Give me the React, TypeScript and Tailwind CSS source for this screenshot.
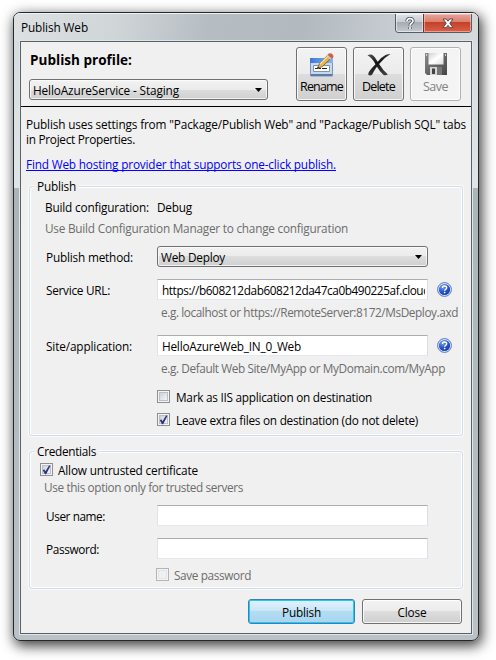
import { useLayoutEffect, useRef, useState } from "react";
import type { ReactNode } from "react";

/** A single line of text whose letter spacing is tuned so that it spans `w` pixels. */
function Line({ w, children, className = "" }: { w: number; children: string; className?: string }) {
  const ref = useRef<HTMLSpanElement>(null);
  const [spacing, setSpacing] = useState(0);
  useLayoutEffect(() => {
    if (ref.current) {
      const natural = ref.current.getBoundingClientRect().width - spacing * children.length;
      setSpacing((w - natural) / children.length);
    }
  }, [w, children]);
  return (
    <span className={`inline-block shrink-0 whitespace-pre ${className}`}>
      <span ref={ref} style={{ letterSpacing: spacing }}>
        {children}
      </span>
    </span>
  );
}

function Arrow() {
  return (
    <svg width="7" height="4" viewBox="0 0 7 4" className="shrink-0">
      <path d="M0 0h7L3.5 4z" fill="#000" />
    </svg>
  );
}

function Select({ children, className }: { children: ReactNode; className: string }) {
  return (
    <div
      className={`flex h-[21px] items-center justify-between rounded-[3px] border border-[#707070] bg-[linear-gradient(#f2f2f2_0,#ebebeb_50%,#dddddd_50%,#cfcfcf_100%)] pr-[5px] pl-[3px] shadow-[inset_0_0_0_1px_rgba(255,255,255,0.7)] ${className}`}
    >
      {children}
      <Arrow />
    </div>
  );
}

function Check({ on = false, disabled = false }: { on?: boolean; disabled?: boolean }) {
  return (
    <span
      className={`flex size-[13px] shrink-0 items-center justify-center border p-px ${disabled ? "border-[#b1b5b8] bg-[#f4f4f4]" : "border-[#8e8f8f] bg-[#f4f4f4]"}`}
    >
      <span
        className={`flex size-[9px] items-center justify-center border ${disabled ? "border-[#e2e4e6] bg-[#f0f0f0]" : "border-[#b9bfc6] bg-linear-to-br from-[#cdd2d8] to-[#f5f6f7]"}`}
      >
        {on && (
          <svg width="9" height="10" viewBox="0 0 9 10" className="shrink-0">
            <path d="M0.8 5.2 2.2 4.2 3.5 6.3 7 0.6 8.5 0.8 4.2 9.2 3 9.2z" fill="#31347c" />
          </svg>
        )}
      </span>
    </span>
  );
}

function Field({ children, className = "" }: { children?: ReactNode; className?: string }) {
  return (
    <div
      className={`flex h-[21px] w-[271px] shrink-0 items-center overflow-hidden border border-t-[#abadb3] border-r-[#dbdfe6] border-b-[#e3e9ef] border-l-[#e2e3ea] bg-white pl-1 ${className}`}
    >
      <div className="flex w-[263px] overflow-hidden">{children}</div>
    </div>
  );
}

function Help() {
  return (
    <svg width="15" height="15" viewBox="0 0 15 15" className="ml-[9px] shrink-0">
      <defs>
        <radialGradient id="help" cx="35%" cy="25%" r="80%">
          <stop offset="0" stopColor="#7ba4ee" />
          <stop offset="0.55" stopColor="#2b59d0" />
          <stop offset="1" stopColor="#1438a0" />
        </radialGradient>
      </defs>
      <circle cx="7.5" cy="7.5" r="6.9" fill="#e4ecfa" stroke="#4f74bf" strokeWidth="1" />
      <circle cx="7.5" cy="7.5" r="5.6" fill="url(#help)" />
      <path d="M5.4 6c0-2.8 4.3-2.6 4.3-.3 0 1.500-2 1.500-2 3.100" fill="none" stroke="#fff" strokeWidth="1.400" />
      <path d="M6.900 9.800h1.500v1.500H6.900z" fill="#fff" />
    </svg>
  );
}

function RenameIcon() {
  return (
    <svg width="24" height="24" viewBox="0 0 24 24">
      <defs>
        <linearGradient id="bar" x2="1">
          <stop stopColor="#3c78dc" />
          <stop offset="1" stopColor="#8db4ee" />
        </linearGradient>
      </defs>
      <path d="M0.5 5.5h22v17.5h-22z" fill="#c9d8ec" stroke="#7795c0" />
      <path d="M0 5h23v5H0z" fill="url(#bar)" />
      <path d="M1 21h21v2H1z" fill="#5a7cab" />
      <path d="M3.5 12.5h16v6h-16z" fill="#fff" stroke="#8191a6" />
      <path d="M5 15.500h3M9 15.500h2M12 15.500h5" stroke="#222" strokeWidth="1.200" />
      <path d="m7.500 15.500 2-5L18.500 1.300l3.500 3L12.500 13.500z" fill="#e7b34f" stroke="#6b5632" strokeWidth="0.800" />
      <path d="m10 11 9-9" stroke="#fae3a0" strokeWidth="1.200" />
      <path d="m17.500 2.300 1.500-1.800q2-1 3.600 1t.4 3.200L21.500 5.500z" fill="#cf604b" />
      <path d="m16.800 3 1-1 3.500 3.500-1 1z" fill="#c8ccd0" />
      <path d="m7 16 .9-2.600 1.700 1.500z" fill="#222" />
    </svg>
  );
}

function DeleteIcon() {
  return (
    <svg width="24" height="24" viewBox="0 0 24 24">
      <defs>
        <linearGradient id="cross" x2="0.300" y2="1">
          <stop stopColor="#555" />
          <stop offset="0.500" stopColor="#111" />
          <stop offset="1" stopColor="#3c3c3c" />
        </linearGradient>
      </defs>
      <path
        d="M.5 2.200Q3 .8 5.200 1.800 8 3.500 10.700 8.800 14.500 4 18.500 2q2.500-.8 5-.9Q17.500 4.500 12.100 11q4 6.500 8.800 10.500-2.600 1.500-4.600.2Q13 19 9.900 13.800 7 17.800 5.300 21.500 3 23.500 1.200 21.500.7 19 8.500 11.200 5 4.500.5 2.200z"
        fill="url(#cross)"
      />
    </svg>
  );
}

function SaveIcon() {
  return (
    <svg width="24" height="23" viewBox="0 0 24 23">
      <defs>
        <linearGradient id="disk" x2="1" y2="1">
          <stop stopColor="#8b8b8b" />
          <stop offset="1" stopColor="#444" />
        </linearGradient>
        <linearGradient id="label" x2="1" y2="1">
          <stop stopColor="#cfcfcf" />
          <stop offset="0.500" stopColor="#fff" />
          <stop offset="1" stopColor="#ddd" />
        </linearGradient>
      </defs>
      <path d="M1 0h22v22H3L1 20z" fill="url(#disk)" />
      <path d="M4.500 0h15v11.500H4.500z" fill="url(#label)" />
      <path d="M2.500 1v2M21.500 1v2" stroke="#d0d0d0" />
      <path d="M6 14h12v8H6z" fill="#d6d6d6" />
      <path d="M13 14h5v8h-5z" fill="#777" />
      <path d="M8 15.500h3v5.500H8z" fill="#444" />
    </svg>
  );
}

function Tool({ icon, label, w, disabled = false }: { icon: ReactNode; label: string; w: number; disabled?: boolean }) {
  return (
    <div
      className={`flex h-[54px] w-[51px] flex-col items-center rounded-[3px] border shadow-[inset_0_0_0_1px_rgba(255,255,255,0.8)] ${disabled ? "border-[#adb2b5] bg-[#f4f4f4] text-[#838383]" : "border-[#707070] bg-[linear-gradient(#f3f3f3_0,#ebebeb_50%,#dddddd_50%,#d0d0d0_100%)]"}`}
    >
      <div className="flex h-[29px] pt-[5px]">{icon}</div>
      <Line w={w} className="text-[12.5px] leading-[20px]">
        {label}
      </Line>
    </div>
  );
}

function Group({ title, w, children, className }: { title: string; w: number; children: ReactNode; className: string }) {
  return (
    <fieldset
      className={`ml-2 w-[434px] rounded-[3px] border border-[#d0dce6] shadow-[inset_0_0_0_1px_#fff,0_0_0_1px_#fafafa] ${className}`}
    >
      <legend className="ml-1 flex h-4 items-center bg-[#f0f0f0] px-[3px]">
        <Line w={w}>{title}</Line>
      </legend>
      {children}
    </fieldset>
  );
}

export default function App() {
  return (
    <div className="h-[660px] w-[496px] overflow-hidden bg-white pt-3 pl-[13px] font-['Open_Sans','Noto_Sans',sans-serif] text-[11.8px] leading-[16px] text-black">
      <div className="flex h-[629px] w-[466px] flex-col rounded-[7px] border border-[#25292b] bg-[linear-gradient(#d4dade_0,#e0e5e7_175px,#abb4b8_175px,#bac2c8_100%)] shadow-[2px_4px_13px_1px_rgba(0,0,0,0.75)]">
        <div className="flex h-[28px] shrink-0 justify-between rounded-t-[6px] border-t border-[#eef2f4] bg-[linear-gradient(100deg,#dce0e3_0,#d0d5d8_22%,#b6bdc2_42%,#b2b9bf_62%,#c3c9ce_78%,#d5dadd_100%)]">
          <Line w={67} className="pt-[5px] pl-[7px]">
            Publish Web
          </Line>
          <div className="mr-[6px] flex h-[19px] overflow-hidden rounded-b-[4px] border border-t-0 border-[#565d62]">
            <div className="flex w-[27px] items-center justify-center bg-[linear-gradient(#e0e4e7_0,#c5cacf_45%,#a4abb1_45%,#c4cacf_100%)] shadow-[inset_0_0_0_1px_rgba(255,255,255,0.5)]">
              <svg width="10" height="13" viewBox="0 0 10 13">
                <path d="M2 4.300C2 .6 8 .7 8 4c0 2-3 2.200-3 4.700M5 10v2" fill="none" stroke="#4f5662" strokeWidth="3.300" />
                <path d="M2 4.300C2 .6 8 .7 8 4c0 2-3 2.200-3 4.700M5 10v2" fill="none" stroke="#fff" strokeWidth="1.600" />
              </svg>
            </div>
            <div className="flex w-[48px] items-center justify-center border-l border-[#6d3030] bg-[linear-gradient(#e8a69b_0,#db7d6c_45%,#c43f28_45%,#da6048_100%)] shadow-[inset_0_0_0_1px_rgba(255,210,200,0.55)]">
              <svg width="12" height="11" viewBox="0 0 12 11">
                <path
                  d="M1 1h3.300L6 3.200 7.700 1H11L7.800 5.200 11 9.700H7.700L6 7.300 4.300 9.700H1L4.200 5.200z"
                  fill="#fff"
                  stroke="#5b4a53"
                  strokeWidth="1"
                />
              </svg>
            </div>
          </div>
        </div>
        <div className="ml-[6px] flex h-[593px] w-[452px] flex-col border border-[#5b6266] bg-[#f0f0f0] shadow-[0_0_0_1px_#dfe5e9]">
          <div className="flex h-[65px] shrink-0 justify-between border-b border-black pr-[10px] pl-2">
            <div className="flex flex-col">
              <Line w={102} className="mt-2 ml-px text-[13.5px] leading-[20px] font-bold">
                Publish profile:
              </Line>
              <Select className="mt-[9px] w-[239px]">
                <Line w={146}>HelloAzureService - Staging</Line>
              </Select>
            </div>
            <div className="mt-[5px] flex gap-[6px]">
              <Tool icon={<RenameIcon />} label="Rename" w={43} />
              <Tool icon={<DeleteIcon />} label="Delete" w={33} />
              <Tool icon={<SaveIcon />} label="Save" w={25} disabled />
            </div>
          </div>

          <div className="mt-[10px] ml-[5px] flex flex-col items-start leading-[15px]">
            <Line w={440}>{'Publish uses settings from "Package/Publish Web" and "Package/Publish SQL" tabs'}</Line>
            <Line w={109}>in Project Properties.</Line>
            <a className="mt-[9px] h-[15px] border-b border-[#0000ff] leading-[16px] text-[#0000ff]">
              <Line w={310}>Find Web hosting provider that supports one-click publish.</Line>
            </a>
          </div>

          <Group title="Publish" w={39} className="mt-[7px] h-[258px]">
            <div className="ml-[15px] flex flex-col items-start">
              <div className="mt-[5px] flex h-4 items-center">
                <Line w={104} className="mr-2">
                  Build configuration:
                </Line>
                <Line w={35}>Debug</Line>
              </div>
              <div className="mt-[5px] flex h-4 text-[#6d6d6d]">
                <Line w={303}>Use Build Configuration Manager to change configuration</Line>
              </div>
              <div className="mt-[10px] ml-px flex h-[21px] items-center">
                <div className="w-[111px]">
                  <Line w={87}>Publish method:</Line>
                </div>
                <Select className="w-[271px]">
                  <Line w={64}>Web Deploy</Line>
                </Select>
              </div>
              <div className="mt-3 ml-px flex h-[21px] items-center">
                <div className="w-[111px]">
                  <Line w={64}>Service URL:</Line>
                </div>
                <Field>
                  <Line w={268}>https://b608212dab608212da47ca0b490225af.cloud</Line>
                </Field>
                <Help />
              </div>
              <div className="mt-[4px] ml-[116px] flex h-4 text-[#6d6d6d]">
                <Line w={297}>e.g. localhost or https://RemoteServer:8172/MsDeploy.axd</Line>
              </div>
              <div className="mt-[15px] ml-px flex h-[21px] items-center">
                <div className="w-[111px]">
                  <Line w={86}>Site/application:</Line>
                </div>
                <Field>
                  <Line w={139}>HelloAzureWeb_IN_0_Web</Line>
                </Field>
                <Help />
              </div>
              <div className="mt-[4px] ml-[116px] flex h-4 text-[#6d6d6d]">
                <Line w={284}>e.g. Default Web Site/MyApp or MyDomain.com/MyApp</Line>
              </div>
              <div className="mt-[13px] ml-[112px] flex h-[15px] items-center gap-[6px]">
                <Check />
                <Line w={196}>Mark as IIS application on destination</Line>
              </div>
              <div className="mt-[8px] ml-[112px] flex h-[15px] items-center gap-[6px]">
                <Check on />
                <Line w={242}>Leave extra files on destination (do not delete)</Line>
              </div>
            </div>
          </Group>

          <Group title="Credentials" w={59} className="mt-[7px] h-[146px]">
            <div className="flex flex-col items-start">
              <div className="mt-[3px] ml-[10px] flex h-[15px] items-center gap-[5px]">
                <Check on />
                <Line w={140}>Allow untrusted certificate</Line>
              </div>
              <div className="mt-[2px] ml-[14px] flex h-4 text-[#6d6d6d]">
                <Line w={199}>Use this option only for trusted servers</Line>
              </div>
              <div className="mt-[10px] ml-4 flex h-[21px] items-center">
                <div className="w-[111px]">
                  <Line w={59}>User name:</Line>
                </div>
                <Field />
              </div>
              <div className="mt-3 ml-4 flex h-[21px] items-center">
                <div className="w-[111px]">
                  <Line w={53}>Password:</Line>
                </div>
                <Field />
              </div>
              <div className="mt-2 ml-[126px] flex h-[15px] items-center gap-[5px] text-[#6d6d6d]">
                <Check disabled />
                <Line w={77}>Save password</Line>
              </div>
            </div>
          </Group>

          <div className="mt-[10px] flex gap-[7px] pl-[227px]">
            <div className="flex h-[25px] w-[107px] items-center justify-center rounded-[3px] border border-[#3c7fb1] bg-[linear-gradient(#e5f4fc_0,#c4e5f6_50%,#b3dcf3_50%,#a8d5ef_100%)] shadow-[inset_0_0_0_1px_#22c8fb]">
              <Line w={39}>Publish</Line>
            </div>
            <div className="flex h-[25px] w-[100px] items-center justify-center rounded-[3px] border border-[#707070] bg-[linear-gradient(#f3f3f3_0,#ebebeb_50%,#dddddd_50%,#cfcfcf_100%)] shadow-[inset_0_0_0_1px_rgba(255,255,255,0.8)]">
              <Line w={29}>Close</Line>
            </div>
          </div>
        </div>
      </div>
    </div>
  );
}
